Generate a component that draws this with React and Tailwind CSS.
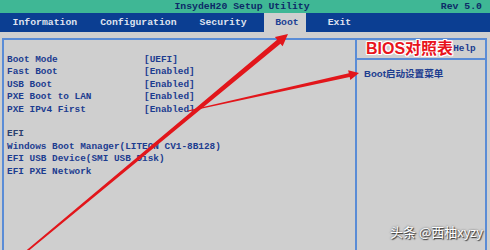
const mono = "font-['Liberation_Mono',monospace]";

const bootItems = [
  ["Boot Mode", "[UEFI]"],
  ["Fast Boot", "[Enabled]"],
  ["USB Boot", "[Enabled]"],
  ["PXE Boot to LAN", "[Enabled]"],
  ["PXE IPv4 First", "[Enabled]"],
];

const efiItems = [
  "Windows Boot Manager(LITEON CV1-8B128)",
  "EFI USB Device(SMI USB Disk)",
  "EFI PXE Network",
];

// tapered arrow polygon, thin at the tail and wider toward the head
function arrow(x1, y1, x2, y2, w1, w2, hl, hw) {
  const dx = x2 - x1;
  const dy = y2 - y1;
  const len = Math.hypot(dx, dy);
  const ux = dx / len;
  const uy = dy / len;
  const nx = -uy;
  const ny = ux;
  const bx = x2 - ux * hl;
  const by = y2 - uy * hl;
  const pts = [
    [x1 + nx * w1, y1 + ny * w1],
    [bx + nx * w2, by + ny * w2],
    [bx + nx * hw, by + ny * hw],
    [x2, y2],
    [bx - nx * hw, by - ny * hw],
    [bx - nx * w2, by - ny * w2],
    [x1 - nx * w1, y1 - ny * w1],
  ];
  return pts.map((p) => p.map((v) => v.toFixed(2)).join(",")).join(" ");
}

export default function App() {
  return (
    <div className="relative w-[490px] h-[250px] overflow-hidden bg-[#cfcfcf]">
      <div
        className={`grid grid-cols-[1fr_auto_1fr] items-center h-[13px] bg-[#3fb795] text-[#0d2a68] font-bold text-[9.8px] leading-[13px] ${mono}`}
      >
        <div />
        <div className="-ml-[6px]">InsydeH20 Setup Utility</div>
        <div className="text-right pr-[8px]">Rev 5.0</div>
      </div>

      <div
        className={`flex items-stretch h-[19px] bg-[#0b3e92] text-[#dfe3ef] font-bold text-[9.8px] leading-[19px] ${mono}`}
      >
        <div className="pl-[12.5px] pr-[11.5px]">Information</div>
        <div className="px-[11.5px]">Configuration</div>
        <div className="px-[11.5px]">Security</div>
        <div className="ml-[6px] pl-[11px] pr-[7px] bg-[#cfcfcf] text-[#1c3f94]">
          Boot
        </div>
        <div className="ml-[22px]">Exit</div>
      </div>

      <div className="mt-[6px] ml-[2px] mr-[3px] h-[220px] flex border-2 border-[#5a8cd6]">
        <div
          className={`w-[351px] shrink-0 pl-[3px] pt-[14px] text-[9.4px] leading-[12.4px] font-bold text-[#1c3c8f] ${mono}`}
        >
          {bootItems.map(([label, value]) => (
            <div key={label} className="grid grid-cols-[137px_1fr]">
              <span>{label}</span>
              <span>{value}</span>
            </div>
          ))}
          <div className="h-[12.4px]" />
          <div className="text-[#2b3f6e]">EFI</div>
          {efiItems.map((item) => (
            <div key={item}>{item}</div>
          ))}
        </div>

        <div className="flex-1 min-w-0 border-l-2 border-[#5a8cd6]">
          <div className="h-[20px] flex items-center justify-between pl-[9px] pr-[10px] border-b-2 border-[#5a8cd6]">
            <span className="shrink-0 whitespace-nowrap text-[16px] leading-[18px] font-bold text-[#e8141c] font-['Liberation_Sans','Noto_Sans_CJK_SC',sans-serif] [text-shadow:1px_0_0_#fff,-1px_0_0_#fff,0_1px_0_#fff,0_-1px_0_#fff,1px_1px_0_#fff,-1px_-1px_0_#fff,1px_-1px_0_#fff,-1px_1px_0_#fff]">
              BIOS对照表
            </span>
            <span
              className={`shrink-0 whitespace-nowrap text-[9.4px] leading-[18px] font-bold text-[#1c3c8f] ${mono}`}
            >
              Help
            </span>
          </div>
          <div className="pl-[7px] pt-[8px] whitespace-nowrap text-[9.6px] leading-[12px] font-bold text-[#1c3c8f] font-['Liberation_Sans','Noto_Sans_CJK_SC',sans-serif]">
            Boot启动设置菜单
          </div>
        </div>
      </div>

      <svg
        className="absolute inset-0 pointer-events-none"
        width="490"
        height="250"
        viewBox="0 0 490 250"
      >
        <polygon
          points={arrow(27, 251, 288, 34, 0.9, 2.6, 12, 6)}
          fill="#e2161b"
        />
        <polygon
          points={arrow(188, 111, 359, 73, 0.5, 2, 10, 5)}
          fill="#e2161b"
        />
      </svg>

      <div className="absolute right-[7px] bottom-[10px] whitespace-nowrap text-[13px] leading-[16px] text-white font-['Noto_Sans_CJK_SC',sans-serif] [text-shadow:1px_1px_1px_#333,0_0_2px_#555]">
        头条 @西柚xyzy
      </div>
    </div>
  );
}
